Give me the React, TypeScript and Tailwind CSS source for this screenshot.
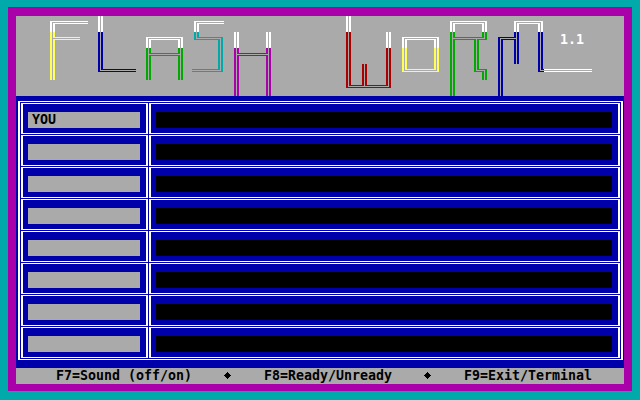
type Stroke = [x: number, y: number, w: number, h: number];
type Run = [col: number, row: number, cells: string, fill: string];

const CELL_W = 8;
const CELL_H = 16;

// Double-rule pieces inside one 8x16 cell.
const PIECES: Record<string, Stroke[]> = {
  '═': [[0, 5, 8, 1], [0, 7, 8, 1]],
  '║': [[2, 0, 2, 16], [5, 0, 2, 16]],
  '╔': [[2, 5, 6, 1], [2, 5, 2, 11], [5, 7, 3, 1], [5, 7, 2, 9]],
  '╗': [[0, 5, 7, 1], [5, 5, 2, 11], [0, 7, 4, 1], [2, 7, 2, 9]],
  '╚': [[2, 0, 2, 8], [2, 7, 6, 1], [5, 0, 2, 6], [5, 5, 3, 1]],
  '╝': [[5, 0, 2, 8], [0, 7, 7, 1], [2, 0, 2, 6], [0, 5, 4, 1]],
  '╠': [[2, 0, 2, 16], [5, 0, 2, 6], [5, 5, 3, 1], [5, 7, 3, 1], [5, 7, 2, 9]],
  '╣': [[5, 0, 2, 16], [2, 0, 2, 6], [0, 5, 4, 1], [0, 7, 4, 1], [2, 7, 2, 9]],
  '╦': [[0, 5, 8, 1], [0, 7, 4, 1], [2, 7, 2, 9], [5, 7, 3, 1], [5, 7, 2, 9]],
  '╩': [[0, 7, 8, 1], [2, 0, 2, 6], [0, 5, 4, 1], [5, 0, 2, 6], [5, 5, 3, 1]],
};

const WHITE = '#ffffff';
const YELLOW = '#ffff55';
const BLUE = '#0000aa';
const GREEN = '#00aa00';
const CYAN = '#00aaaa';
const MAGENTA = '#aa00aa';
const RED = '#aa0000';

const LOGO: Run[] = [
  // F
  [4, 0, '╔════', WHITE],
  [4, 1, '╠═══', YELLOW],
  [4, 2, '║', YELLOW],
  [4, 3, '║', YELLOW],
  // L
  [10, 0, '║', WHITE],
  [10, 1, '║', BLUE],
  [10, 2, '║', BLUE],
  [10, 3, '╚════', BLUE],
  // A
  [16, 1, '╔═══╗', WHITE],
  [16, 2, '╠═══╣', GREEN],
  [16, 3, '║   ║', GREEN],
  // S
  [22, 0, '╔═══', WHITE],
  [22, 1, '╚══╗', CYAN],
  [22, 2, '   ║', CYAN],
  [22, 3, '═══╝', CYAN],
  // H
  [27, 1, '║   ║', WHITE],
  [27, 2, '╠═══╣', MAGENTA],
  [27, 3, '║   ║', MAGENTA],
  [27, 4, '║   ║', MAGENTA],
  // W
  [41, 0, '║', WHITE],
  [41, 1, '║', RED],
  [46, 1, '║', WHITE],
  [41, 2, '║    ║', RED],
  [41, 3, '║ ║  ║', RED],
  [41, 4, '╚═╩══╝', RED],
  // O
  [48, 1, '╔═══╗', WHITE],
  [48, 2, '║   ║', YELLOW],
  [48, 3, '╚═══╝', YELLOW],
  // R
  [54, 0, '╔═══╗', WHITE],
  [54, 1, '╠══╦╝', GREEN],
  [54, 2, '║  ║', GREEN],
  [54, 3, '║  ╚╗', GREEN],
  [54, 4, '║', GREEN],
  // M with its trailing rule
  [62, 0, '╔══╗', WHITE],
  [60, 1, '╔═╣  ║', BLUE],
  [60, 2, '║ ║  ║', BLUE],
  [60, 3, '║    ╚', BLUE],
  [60, 4, '║', BLUE],
  [66, 3, '══════', WHITE],
];

function runPath([col, row, cells]: Run) {
  return Array.from(cells)
    .flatMap((c, i) =>
      (PIECES[c] ?? []).map(
        ([x, y, w, h]) =>
          `M${(col + i) * CELL_W + x} ${row * CELL_H + y}h${w}v${h}h${-w}z`,
      ),
    )
    .join('');
}

function Header() {
  return (
    <header className="h-20 bg-[#aaaaaa]">
      <svg width="608" height="80" viewBox="0 0 608 80" className="block">
        <g shapeRendering="crispEdges">
          {LOGO.map((run, i) => (
            <path key={i} d={runPath(run)} fill={run[3]} />
          ))}
        </g>
        <text x="544" y="28" fill="#ffffff">
          1.1
        </text>
      </svg>
    </header>
  );
}

function PlayerRow({ name }: { name: string }) {
  return (
    <div className="flex h-[31px] gap-px">
      <div className="w-[127px] border-x-2 border-y border-white pt-2 pl-[5px]">
        <div className="h-4 w-28 bg-[#aaaaaa] pl-1 leading-4">{name}</div>
      </div>
      <div className="w-[471px] border-x-2 border-y border-white pt-2 pl-[5px]">
        <div className="h-4 w-[456px] bg-black" />
      </div>
    </div>
  );
}

function Diamond() {
  return (
    <svg width="8" height="16" viewBox="0 0 8 16" shapeRendering="crispEdges">
      <path d="M3 4h1v1h1v1h1v1h1v1h-1v1h-1v1h-1v1h-1v-1h-1v-1h-1v-1h-1v-1h1v-1h1v-1h1z" />
    </svg>
  );
}

const PLAYERS = ['YOU', '', '', '', '', '', '', ''];

export default function App() {
  return (
    <div className="h-[400px] w-[640px] overflow-hidden bg-[#00aaaa] px-2 pt-[7px] font-['DejaVu_Sans_Mono',monospace] text-[13.29px] font-bold text-black">
      <div className="h-[384px] bg-[#aa00aa] px-2 pt-[9px]">
        <Header />
        <main className="h-[272px] bg-[#0000aa] px-0.5 pt-[5px]">
          <div className="flex h-[259px] w-[605px] flex-col gap-px border-x-2 border-y border-white p-px">
            {PLAYERS.map((name, i) => (
              <PlayerRow key={i} name={name} />
            ))}
          </div>
        </main>
        <footer className="flex h-4 gap-8 bg-[#aaaaaa] pl-10 leading-4 whitespace-nowrap">
          <span className="w-[136px]">F7=Sound (off/on)</span>
          <Diamond />
          <span className="w-32">F8=Ready/Unready</span>
          <Diamond />
          <span className="w-32">F9=Exit/Terminal</span>
        </footer>
      </div>
    </div>
  );
}
